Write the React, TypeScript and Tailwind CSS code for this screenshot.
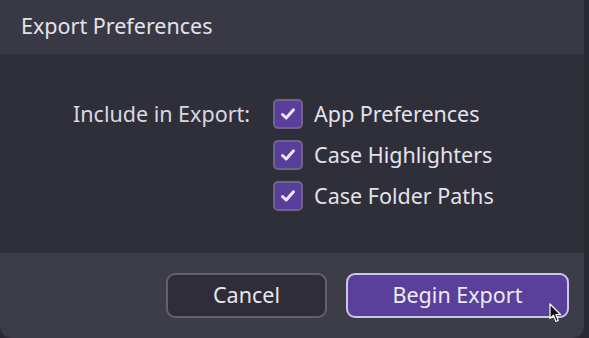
import React from 'react';

const items = ['App Preferences', 'Case Highlighters', 'Case Folder Paths'];

function CheckBox() {
  return (
    <div className="flex h-[30px] w-[30px] items-center justify-center rounded-[5px] border-2 border-[#6f6488] bg-[#5a3e9b]">
      <svg width="18" height="18" viewBox="0 0 18 18" fill="none">
        <path
          d="M3.5 9.5 L7.2 13 L14.5 4.8"
          stroke="#ece6f7"
          strokeWidth="3"
          strokeLinecap="round"
          strokeLinejoin="round"
        />
      </svg>
    </div>
  );
}

export default function App() {
  return (
    <div className="h-[338px] w-[589px] bg-[#2a2a32] font-['Noto_Sans',sans-serif] text-[21.5px] text-[#e3e2ea]">
      <div className="relative flex h-[338px] w-[584px] flex-col overflow-hidden rounded-b-[12px]">
        <div className="flex h-[54px] items-center bg-[#393945] pl-[21px] pb-[2px]">
          Export Preferences
        </div>
        <div className="flex h-[199px] bg-[#2f2f3a] pt-[45px] pl-[73px]">
          <div className="leading-[30px] text-[#d9d8e0]">Include in Export:</div>
          <div className="ml-[23px] flex flex-col gap-[11px]">
            {items.map((item) => (
              <div key={item} className="flex items-center gap-[11px]">
                <CheckBox />
                <span className="leading-[30px]">{item}</span>
              </div>
            ))}
          </div>
        </div>
        <div className="flex flex-1 justify-end gap-[19px] bg-[#3d3c49] pt-[20px] pr-[15px]">
          <button className="h-[45px] w-[161px] rounded-[9px] border-2 border-[#626170] bg-[#2e2d38] text-[#e8e7ee]">
            Cancel
          </button>
          <button className="h-[45px] w-[223px] rounded-[9px] border-2 border-[#cdc6e6] bg-[#5a3f9b] text-[#ecebf3]">
            Begin Export
          </button>
        </div>
        <svg
          className="absolute left-[549px] top-[303px]"
          width="13"
          height="20"
          viewBox="0 0 13 20"
        >
          <path d="M1 1 L1 15.5 L4.5 12.2 L7 18.5 L9.3 17.5 L6.9 11.5 L11.5 11.5 Z" fill="#111" stroke="#fff" strokeWidth="1.2" strokeLinejoin="round" />
        </svg>
      </div>
    </div>
  );
}
